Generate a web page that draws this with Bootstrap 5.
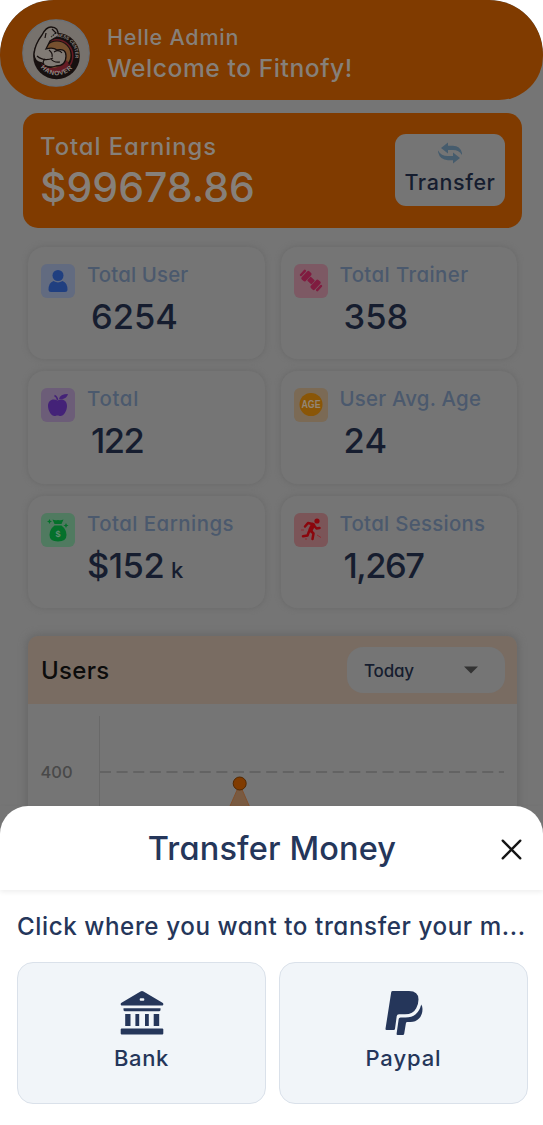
<!DOCTYPE html>
<html lang="en">
<head>
<meta charset="utf-8">
<meta name="viewport" content="width=device-width, initial-scale=1">
<title>Fitnofy Admin</title>
<link href="https://cdn.jsdelivr.net/npm/bootstrap@5.3.0/dist/css/bootstrap.min.css" rel="stylesheet">
<style>
  body{font-family:Inter,"Noto Sans",sans-serif;font-feature-settings:"cv11" 1;font-weight:500;background:#fff;color:#161d2f;height:1125px;overflow:hidden}
  .screen{height:1125px;background:#757575;border-radius:54px 54px 0 0;overflow:hidden}
  .topbar{height:100px;background:#803b00;border-radius:54px 54px 44px 44px;padding:19px 0 0 22px;color:#86807a}
  .avatar{width:68px;height:68px}
  .hello{font-size:21.5px;line-height:31px;letter-spacing:.78px;padding:3px 0 0 1px}
  .welcome{font-size:24.6px;line-height:31px;letter-spacing:.56px;padding-left:1px}
  .balance{margin:13px 21px 0 23px;height:115px;background:#803b00;border-radius:15px;padding:21px 17px 0 17px;color:#86807a}
  .bal-title{font-size:23.8px;line-height:26px;letter-spacing:.95px}
  .bal-sum{font-size:41px;line-height:54px;letter-spacing:0;font-weight:450}
  .btn-transfer,.btn-transfer:hover{width:110px;height:72px;background:#757575;border:0;border-radius:11px;padding:8px 0 0;color:#161d2f;font-size:21.5px;line-height:30px;letter-spacing:.6px;font-weight:500}
  .btn-transfer svg{width:26px;height:22px;margin-bottom:3px}
  .stats{display:grid;grid-template-columns:236.5px 236.5px;column-gap:16px;row-gap:12px;margin:19px 0 0 28px}
  .stat{height:112.4px;border-radius:16px;background:#757575;box-shadow:0 0 5px 1px #6c6c6c;padding:14px 0 0 13px}
  .tile{width:34px;height:34px;border-radius:6px;margin-top:3px}
  .stat-label{font-size:20.4px;line-height:28px;font-weight:450;color:#4b596d;white-space:nowrap}
  .stat-num{font-size:34.5px;line-height:55px;padding-left:4px;white-space:nowrap}
  .panel{margin:28px 26px 0 28px;height:400px;border-radius:10px 10px 0 0;box-shadow:0 0 7px 2px #686868;overflow:hidden}
  .panel-head{height:68px;background:#796c62;padding:0 12px 0 13px;color:#0c0c0c}
  .panel-title{font-size:24px;letter-spacing:.3px;line-height:68px;padding-top:2px}
  .period{width:158px;height:46px;border-radius:16px;background:#757575;color:#161d2f;padding:0 27px 0 17px;font-size:17px;letter-spacing:-.2px}
  .period span{padding-top:3px}
  .chart-box{display:block;width:489px;height:200px}
  .sheet{height:319px;background:#fff;border-radius:28px 28px 0 0;color:#25365a}
  .sheet-head{height:84px;box-shadow:0 2px 5px #00000012;padding:2px 21px 0 0}
  .sheet-title{font-size:32.5px;letter-spacing:.15px;line-height:82px;padding-left:43px}
  .hint{font-size:24.2px;line-height:34px;padding:20px 0 0 17px;letter-spacing:.58px;white-space:nowrap}
  .choices{display:grid;grid-template-columns:249px 249px;gap:13px;padding:18px 0 0 17px}
  .choice,.choice:hover{height:142px;border:1.5px solid #dae1ea;border-radius:16px;background:#f1f5f9;color:#25365a;font-size:22px;font-weight:500;line-height:30px;padding:0 0 3px}
  .choice svg{width:44px;height:44px;margin-bottom:8px}
</style>
</head>
<body>
<main class="screen">
  <header class="topbar d-flex">
    <svg class="avatar flex-shrink-0" viewBox="0 0 68 68">
      <defs>
        <path id="arcTop" d="M28 20A17.500 17.500 0 0 1 50 46"/>
        <path id="arcLow" d="M17 46A20.500 20.500 0 0 0 52 47"/>
      </defs>
      <circle cx="34" cy="34" r="33.200" fill="#77726d" stroke="#69717a" stroke-width="1.200"/>
      <circle cx="34.500" cy="37" r="23.300" fill="#17100f"/>
      <circle cx="34.500" cy="37" r="16.300" fill="none" stroke="#651b23" stroke-width="1.500"/>
      <circle cx="35" cy="36" r="13.500" fill="#76502f"/>
      <path d="M24 48q12 4 21-7l2 5q-9 11-20 6z" fill="#651b23"/>
      <path d="M12 35q1-10 8-19 4-8 9-8 8 0 7 9l-8 5-4 8q7-2 11 1 9-2 9 6 0 10-10 10-9 3-14-3-8-1-8-9z" fill="#817b75" stroke="#17100f" stroke-width="1.300"/>
      <path d="M15 37q7 6 16 2m-4-8q4 3 3 7m2-5q5-3 8 1m-11 6q3 4 9 3m-15-3q-3 3-1 5M24 14l-1 5m7-9 4 4-5 4" fill="none" stroke="#17100f" stroke-width="1.200"/>
      <g fill="#8c8681" font-family="Liberation Sans,sans-serif" font-weight="700">
        <text font-size="4.600"><textPath href="#arcTop" textLength="39">FITNESS CENTER</textPath></text>
        <text font-size="6.500"><textPath href="#arcLow" startOffset="3" textLength="36">HANOVER</textPath></text>
      </g>
    </svg>
    <div class="ms-3">
      <div class="hello">Helle Admin</div>
      <div class="welcome">Welcome to Fitnofy!</div>
    </div>
  </header>

  <section class="balance d-flex justify-content-between">
    <div>
      <div class="bal-title">Total Earnings</div>
      <div class="bal-sum">$99678.86</div>
    </div>
    <button class="btn btn-transfer d-flex flex-column align-items-center">
      <svg viewBox="0 0 26 22" fill="#465c6d"><path d="M4 6 11 .5v3.300h5q7 0 9 7.200v2q-3-5-9-5h-5v3.500z"/><path d="M23 16 16 21.500v-3.300h-5Q3 18 1 10V8.500q3 5.500 10 5.500h5v-3.500z"/></svg>
      <span>Transfer</span>
    </button>
  </section>

  <section class="stats">
    <div class="stat d-flex">
      <svg class="tile flex-shrink-0" viewBox="0 0 34 34" style="background:#626b80"><circle cx="17" cy="11.500" r="5.500" fill="#203f80"/><path d="M12.500 17q4.500 2.800 9 0 5 1.500 5 9 0 2-2.500 2H10q-2.500 0-2.500-2 0-7.500 5-9z" fill="#203f80"/></svg>
      <div class="ps-2 ms-1"><div class="stat-label" style="letter-spacing:.15px">Total User</div><div class="stat-num">6254</div></div>
    </div>
    <div class="stat d-flex">
      <svg class="tile flex-shrink-0" viewBox="0 0 34 34" style="background:#7d5964"><g transform="translate(17 16.500) rotate(43)" fill="#801c40"><rect x="-3" y="-2.700" width="6" height="5.400" rx="1"/><rect x="-9" y="-5.500" width="5.500" height="11" rx="1.500"/><rect x="3.500" y="-5.500" width="5.500" height="11" rx="1.500"/><rect x="-12.300" y="-4" width="2.500" height="8" rx="1.200"/><rect x="9.800" y="-4" width="2.500" height="8" rx="1.200"/></g></svg>
      <div class="ps-2 ms-1"><div class="stat-label" style="letter-spacing:.42px">Total Trainer</div><div class="stat-num">358</div></div>
    </div>
    <div class="stat d-flex">
      <svg class="tile flex-shrink-0" viewBox="0 0 34 34" style="background:#6c5d78"><path d="M16.500 12.500C12 10 7 12 7 18c0 5 3.500 10 6.500 10 1.200 0 1.800-.5 3-.5s1.800.5 3 .5c3 0 6.500-5 6.500-10 0-6-5-8-9.500-5.500z" fill="#442278"/><path d="M16.500 12q-.2-3-3-4.500" fill="none" stroke="#442278" stroke-width="1.500"/><path d="M18 11q1-5 9-5-1.500 6-9 5z" fill="#442278"/></svg>
      <div class="ps-2 ms-1"><div class="stat-label" style="letter-spacing:.7px">Total</div><div class="stat-num" style="letter-spacing:-1.500px">122</div></div>
    </div>
    <div class="stat d-flex">
      <svg class="tile flex-shrink-0" viewBox="0 0 34 34" style="background:#7b6a55"><circle cx="17" cy="16.500" r="11.500" fill="#8a5607"/><text x="17" y="20.300" text-anchor="middle" font-family="Liberation Sans,sans-serif" font-size="10.500" font-weight="700" fill="#938675" textLength="19" lengthAdjust="spacingAndGlyphs">AGE</text></svg>
      <div class="ps-2 ms-1"><div class="stat-label" style="letter-spacing:.22px">User Avg. Age</div><div class="stat-num" style="letter-spacing:.2px">24</div></div>
    </div>
    <div class="stat d-flex">
      <svg class="tile flex-shrink-0" viewBox="0 0 34 34" style="background:#507a60"><path d="M11.500 6.500q2.500 1.200 5.500.4 3 .8 5.500-.4L20.500 11h-7z" fill="#04712b"/><path d="M13.500 12.500h7q5 4 5 9.500 0 6.500-8.500 6.500T8.500 22q0-5.500 5-9.500z" fill="#04712b"/><path d="M8.500 6l.8 1.700 1.700.8-1.700.8-.8 1.700-.8-1.700L6 8.500l1.700-.8zm16.500 4 .8 1.700 1.700.8-1.700.8-.8 1.700-.8-1.700-1.700-.8 1.700-.8z" fill="#04712b"/><text x="17" y="24" text-anchor="middle" font-family="Liberation Sans,sans-serif" font-size="9" font-weight="700" fill="#668c73">$</text></svg>
      <div class="ps-2 ms-1"><div class="stat-label" style="letter-spacing:.48px">Total Earnings</div><div class="stat-num ps-0" style="letter-spacing:-.5px">$152 <span class="fs-4" style="margin-left:-2px">k</span></div></div>
    </div>
    <div class="stat d-flex">
      <svg class="tile flex-shrink-0" viewBox="0 0 34 34" style="background:#7b5558"><circle cx="23" cy="8" r="2.600" fill="#8b060d"/><path d="M19.500 12l-3.500 5 3.500 3.500-1 5.500M15 18.500 13.500 22.500l-4.500.8M18.500 11l-4.500-1-3 3.500M20 12.500l2.500 3 3-.5" fill="none" stroke="#8b060d" stroke-width="2.500" stroke-linejoin="round" stroke-linecap="round"/><path d="M19 12 16.500 17" stroke="#8b060d" stroke-width="4.500" stroke-linecap="round"/><path d="M7 17h3m13 5 4 2.500M11 26h2" stroke="#8b2c32" stroke-width="1"/></svg>
      <div class="ps-2 ms-1"><div class="stat-label" style="letter-spacing:.29px">Total Sessions</div><div class="stat-num" style="letter-spacing:-1.500px">1,267</div></div>
    </div>
  </section>

  <section class="panel">
    <div class="panel-head d-flex align-items-center justify-content-between">
      <div class="panel-title">Users</div>
      <div class="period d-flex align-items-center justify-content-between"><span>Today</span>
        <svg width="14" height="8" viewBox="0 0 14 8"><path d="M0 .5h14L7 7.500z" fill="#333"/></svg>
      </div>
    </div>
    <svg class="chart-box" viewBox="0 0 489 200">
      <path d="M71.500 12v188" stroke="#696969"/>
      <path d="M72 68h404" stroke="#5d5d5d" stroke-width="1.500" stroke-dasharray="11 5.620"/>
      <path d="M211.700 80 181 150h61z" fill="#795a41" stroke="#80502d"/>
      <circle cx="211.700" cy="79.500" r="6.500" fill="#803b00" stroke="#532800"/>
      <text x="12.500" y="73.700" font-size="16.500" font-weight="450" fill="#494949">400</text>
    </svg>
  </section>
</main>

<section class="sheet fixed-bottom">
  <div class="sheet-head d-flex align-items-center">
    <div class="sheet-title flex-grow-1 text-center">Transfer Money</div>
    <svg width="21" height="21" viewBox="0 0 21 21"><path d="M1.700 1.700l17.600 17.600m0-17.600L1.700 19.300" stroke="#151515" stroke-width="2.400" stroke-linecap="round"/></svg>
  </div>
  <div class="hint">Click where you want to transfer your m...</div>
  <div class="choices">
    <button class="btn choice d-flex flex-column align-items-center justify-content-center">
      <svg viewBox="0 0 44 44" fill="#25365a"><path fill-rule="evenodd" d="M22 0q.8 0 1.500.5l19 11.300q.8.500.8 1.300v.4q0 1-1 1H1.700q-1 0-1-1v-.4q0-.8.8-1.300L20.500.5Q21.200 0 22 0zm-1.300 7.200q-1 0-1 1v.6q0 1 1 1h2.600q1 0 1-1v-.6q0-1-1-1z"/><path d="M3.500 17.300h37v1.400q0 1.500-1.500 1.500H5q-1.500 0-1.500-1.500z"/><path d="M5.200 23h5.300v12H5.200zm10.200 0h3.800v12h-3.800zm9.600 0h3.800v12H25zm8.700 0h5.500v12h-5.500z"/><rect x=".7" y="37.500" width="42.600" height="6" rx="1"/></svg>
      <span style="letter-spacing:.6px">Bank</span>
    </button>
    <button class="btn choice d-flex flex-column align-items-center justify-content-center">
      <svg viewBox="0 0 44 44" fill="#25365a"><path d="M9.200 1.300Q9.400 0 10.700 0H27q9.500 0 9.500 8.500 0 4.500-2.300 8.800-3 6-11.200 6h-6q-2 0-2.300 1.900l-1.700 12.500q-.1 1.200-1.300 1.200H4.500q-1.200 0-1-1.200z"/><path d="M39.200 13.500Q40.500 15 40.500 18q0 6-3.500 9.500t-8.500 3.500h-3.200q-1.200 0-1.400 1.200l-1.700 10.500q-.2 1.200-1.400 1.200h-5.200q-1.200 0-1-1.200L16.700 28q.2-1.500 1.800-1.500h5q12.500 0 15.700-13z"/></svg>
      <span style="letter-spacing:.9px">Paypal</span>
    </button>
  </div>
</section>
<script src="https://cdn.jsdelivr.net/npm/bootstrap@5.3.0/dist/js/bootstrap.bundle.min.js"></script>
</body>
</html>
